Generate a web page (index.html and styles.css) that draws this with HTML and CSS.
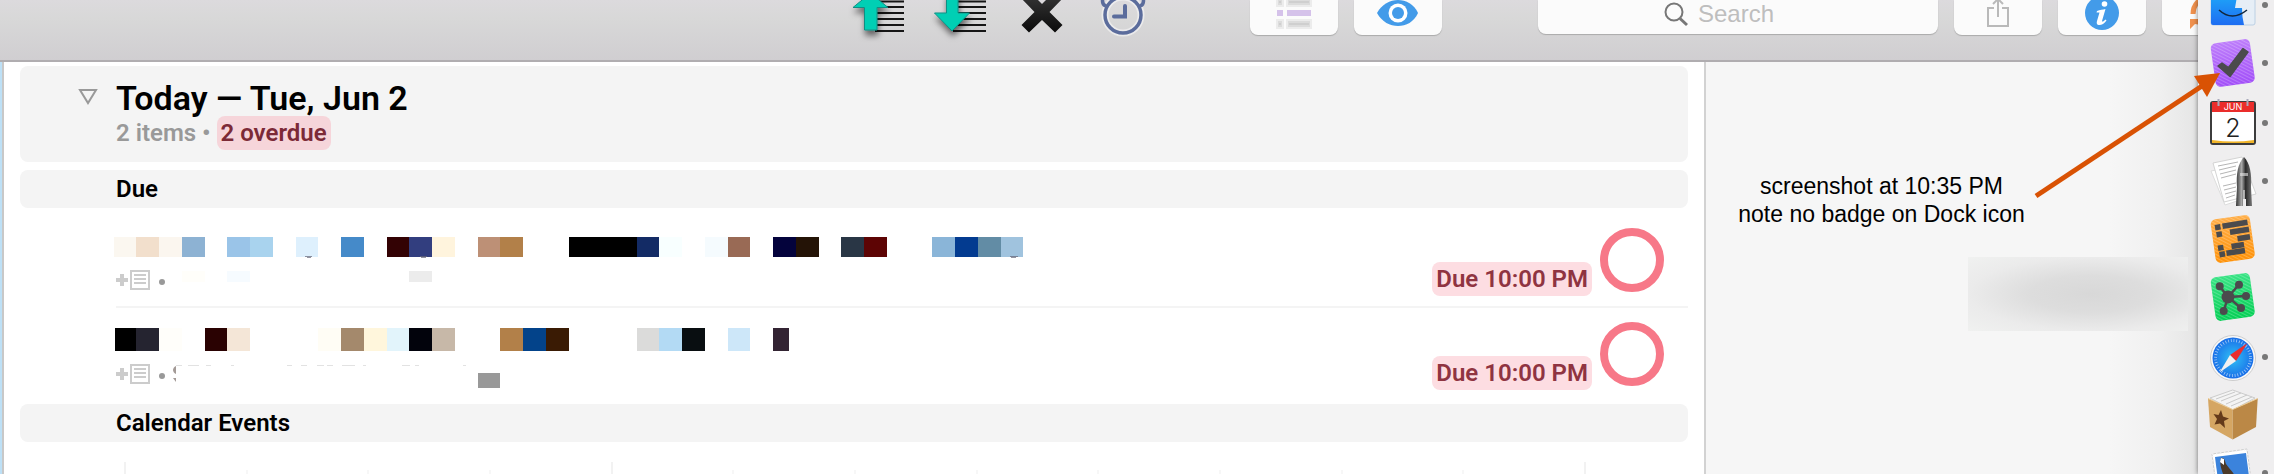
FILE: index.html
```
<!DOCTYPE html>
<html lang="en">
<head>
<meta charset="utf-8">
<title>Forecast</title>
<link rel="stylesheet" href="styles.css">
</head>
<body>
<svg class="defs" width="0" height="0" aria-hidden="true">
  <defs>
    <linearGradient id="purple" x1="0" y1="0" x2="0" y2="1"><stop offset="0" stop-color="#bd7dfb"/><stop offset="1" stop-color="#a24ff8"/></linearGradient>
    <linearGradient id="orange" x1="0" y1="0" x2="0" y2="1"><stop offset="0" stop-color="#ffae48"/><stop offset="1" stop-color="#ff9208"/></linearGradient>
    <linearGradient id="green" x1="0" y1="0" x2="0" y2="1"><stop offset="0" stop-color="#38e384"/><stop offset="1" stop-color="#05cf55"/></linearGradient>
    <linearGradient id="finder" x1="0" y1="0" x2="0" y2="1"><stop offset="0" stop-color="#1ec4fb"/><stop offset="1" stop-color="#1e6df2"/></linearGradient>
    <linearGradient id="ink" x1="0" y1="0" x2="0" y2="1"><stop offset="0" stop-color="#333"/><stop offset="1" stop-color="#0a0a0a"/></linearGradient>
    <linearGradient id="metal" x1="0" y1="0" x2="1" y2="0"><stop offset="0" stop-color="#333"/><stop offset=".35" stop-color="#aaa"/><stop offset=".6" stop-color="#2b2b2b"/><stop offset="1" stop-color="#777"/></linearGradient>
    <radialGradient id="safari"><stop offset="0" stop-color="#2fc0f5"/><stop offset="1" stop-color="#1a6fe8"/></radialGradient>
    <pattern id="stripes" width="3" height="3" patternUnits="userSpaceOnUse" patternTransform="rotate(35)"><path d="M0 0H3" stroke="#fff" stroke-opacity=".22" stroke-width="2"/></pattern>
    <filter id="soft" x="-50%" y="-50%" width="200%" height="200%"><feDropShadow dx="1" dy="5" stdDeviation="3" flood-opacity=".55"/></filter>
  </defs>
</svg>

<div class="screen">
  <div class="window">
    <header class="toolbar">
      <button class="tool" aria-label="Move up">
        <svg width="60" height="44" viewBox="0 0 60 44"><path d="M27 1.500H56M27 7H56M27 13H56M27 19H56M27 25H56M27 31H56" stroke="#161616" stroke-width="2"/><path filter="url(#soft)" d="M22.500-7 40 7.500H29V30H16.500V7.500H5Z" fill="#06cfb4" stroke="#0a8f84"/></svg>
      </button>
      <button class="tool" aria-label="Move down">
        <svg width="60" height="44" viewBox="0 0 60 44"><path d="M27 1.500H56M27 7H56M27 13H56M27 19H56M25 25H56M23 31H56" stroke="#161616" stroke-width="2"/><path filter="url(#soft)" d="M16.500-7H28V13H39.500L22 31 4.500 13H16.500Z" fill="#06cfb4" stroke="#0a8f84"/></svg>
      </button>
      <button class="tool" aria-label="Delete">
        <svg width="60" height="44" viewBox="0 0 60 44"><path d="M9.500 25 22.500 12 8-3H23L30 4 37-3H52L37.500 12 50.500 25 43 32.500 30 20 17 32.500Z" fill="url(#ink)"/></svg>
      </button>
      <button class="tool" aria-label="Snooze">
        <svg width="60" height="44" viewBox="0 0 60 44" fill="none" stroke="#fff" stroke-opacity=".5" stroke-width="7"><circle cx="29" cy="15" r="18"/><g stroke="#5b6c9c" stroke-opacity="1" stroke-width="3.500"><circle cx="29" cy="15" r="18"/><path d="M12 6C7 4 8-2 11-5M46 6C51 4 50-2 47-5"/><path d="M31 6V16.500H20" stroke-width="4" stroke-linecap="round"/></g></svg>
      </button>
      <div class="group group-view">
        <button class="button" aria-label="View">
          <svg width="40" height="32" viewBox="0 0 40 32"><g fill="#dcdcdc" stroke="#ececec" stroke-width="2"><path d="M3-3H9V6H3ZM13-3H37V6H13ZM3 20H9V28H3ZM13 20H37V28H13Z"/></g><path d="M7 2H5M35 2H15M7 24H5M35 24H15" stroke="#cfcfcf" stroke-width="2"/><path d="M3 10H9V16H3ZM13 10H37V16H13Z" fill="#d5c2ea"/></svg>
        </button>
        <button class="button" aria-label="Perspectives">
          <svg width="42" height="32" viewBox="0 0 42 32"><path d="M0 13C5 4 13 0 21 0S37 4 41 13C37 22 29 26 21 26S5 22 0 13Z" fill="#439be9"/><circle cx="21" cy="13" r="9.500" fill="#fff"/><circle cx="21" cy="13" r="6" fill="#439be9"/></svg>
        </button>
      </div>
      <div class="group">
        <label class="search">
          <svg width="26" height="28" viewBox="0 0 26 28" fill="none" stroke="#777"><circle cx="10" cy="12" r="8.500" stroke-width="2"/><path d="M16 18.500 23 25" stroke-width="3"/></svg>
          <input type="text" placeholder="Search" aria-label="Search">
        </label>
        <button class="button" aria-label="Share">
          <svg width="24" height="30" viewBox="0 0 24 30" fill="none" stroke="#b9b9b9" stroke-width="2"><path d="M8 8H2V26H22V8H16M12 17V-2M7 4 12-1 17 4"/></svg>
        </button>
        <button class="button" aria-label="Info">
          <svg width="34" height="32" viewBox="0 0 34 32"><circle cx="17" cy="13" r="17" fill="#439be9"/><circle cx="19.500" cy="4" r="2.800" fill="#fff"/><path d="M12 11C15 10 18 9.500 20.500 9L17 21C17 22.500 19 21 20.500 19.500L21.500 20.500C19 24 16 25.500 13.500 25 11.500 24.500 11.500 22.500 12 21L14.500 12.500H11.500Z" fill="#fff"/></svg>
        </button>
        <button class="button button-last" aria-label="Sync">
          <svg width="36" height="32" viewBox="0 0 36 32"><path d="M3 14C3 4 10-2 18-3" fill="none" stroke="#f0914e" stroke-width="5"/><path d="M0 19H14V28L10 25 5 24 0 29Z" fill="#f0914e"/></svg>
        </button>
      </div>
    </header>

    <div class="body">
      <main class="outline">
        <section class="card day">
          <button class="disclosure" aria-label="Collapse"><svg width="20" height="18" viewBox="0 0 20 18"><path d="M2 2H18L10 15Z" fill="none" stroke="#999" stroke-width="2"/></svg></button>
          <div>
            <h1 class="title">Today — Tue, Jun 2</h1>
            <p class="summary">2 items • <span class="badge badge-overdue">2 overdue</span></p>
          </div>
        </section>
        <h2 class="card section">Due</h2>
        <ul class="items">
          <li class="item">
            <div class="content">
              <svg class="redacted" width="910" height="25" viewBox="0 0 910 25" shape-rendering="crispEdges">
                <path d="M-2 3h22v20h-22z" fill="#fbf7f0"/><path d="M20 3h23v20h-23z" fill="#f2dfcc"/><path d="M43 3h23v20h-23z" fill="#fbf6ef"/><path d="M66 3h23v20h-23z" fill="#8db2d3"/><path d="M111 3h23v20h-23z" fill="#9ac4e8"/><path d="M134 3h23v20h-23z" fill="#a9d3ee"/><path d="M180 3h22v20h-22z" fill="#def0fd"/><path d="M225 3h23v20h-23z" fill="#458ac9"/><path d="M271 3h22v20h-22z" fill="#330204"/><path d="M293 3h23v20h-23z" fill="#323e7f"/><path d="M316 3h23v20h-23z" fill="#fff4dd"/><path d="M362 3h22v20h-22z" fill="#bd9076"/><path d="M384 3h23v20h-23z" fill="#b28049"/><path d="M453 3h68v20h-68z" fill="#000"/><path d="M521 3h22v20h-22z" fill="#132b65"/><path d="M543 3h23v20h-23z" fill="#f8ffff"/><path d="M589 3h23v20h-23z" fill="#f5fbfe"/><path d="M612 3h22v20h-22z" fill="#996a55"/><path d="M657 3h23v20h-23z" fill="#04033c"/><path d="M680 3h23v20h-23z" fill="#241306"/><path d="M725 3h23v20h-23z" fill="#293645"/><path d="M748 3h23v20h-23z" fill="#5d0404"/><path d="M816 3h23v20h-23z" fill="#8ab5d8"/><path d="M839 3h23v20h-23z" fill="#033b90"/><path d="M862 3h23v20h-23z" fill="#628ca5"/><path d="M885 3h22v20h-22z" fill="#a0c3de"/>
                <path d="M189 22h7v1h-7zM191 23h4v1h-4zM304 22h7v1h-7zM305 23h5v1h-5zM894 22h8v1h-8zM895 23h5v1h-5z" fill="#667" fill-opacity=".7"/>
              </svg>
              <svg class="meta" width="400" height="24" viewBox="0 0 400 24">
                <path d="M6 4V16M0 10H12" stroke="#ccc" stroke-width="4"/><path d="M15 1H33V19H15Z" fill="none" stroke="#ccc" stroke-width="2"/><path d="M18 5H30M18 9H30M18 13H30" stroke="#ccc" stroke-width="2"/><circle cx="46" cy="12" r="3" fill="#999"/><path d="M66 1h23v11h-23z" fill="#fffefa"/><path d="M111 1h23v11h-23z" fill="#f6fbff"/><path d="M293 1h23v11h-23z" fill="#ececec"/>
              </svg>
            </div>
            <span class="badge badge-due">Due 10:00 PM</span>
            <input class="status" type="checkbox" aria-label="Complete first item">
          </li>
          <li class="item">
            <div class="content">
              <svg class="redacted" width="910" height="25" viewBox="0 0 910 25" shape-rendering="crispEdges">
                <path d="M-1 0h21v23h-21z" fill="#000"/><path d="M20 0h23v23h-23z" fill="#252430"/><path d="M43 0h23v23h-23z" fill="#fffefa"/><path d="M89 0h22v23h-22z" fill="#2a0202"/><path d="M111 0h23v23h-23z" fill="#f4e6d7"/><path d="M202 0h23v23h-23z" fill="#fffdf5"/><path d="M225 0h23v23h-23z" fill="#a4896c"/><path d="M248 0h23v23h-23z" fill="#fff6dc"/><path d="M271 0h22v23h-22z" fill="#e2f4fb"/><path d="M293 0h23v23h-23z" fill="#02030c"/><path d="M316 0h23v23h-23z" fill="#c7b8a8"/><path d="M384 0h23v23h-23z" fill="#b28049"/><path d="M407 0h23v23h-23z" fill="#03438a"/><path d="M430 0h23v23h-23z" fill="#3a1b04"/><path d="M521 0h22v23h-22z" fill="#dbdbda"/><path d="M543 0h23v23h-23z" fill="#b3daf4"/><path d="M566 0h23v23h-23z" fill="#090e11"/><path d="M612 0h22v23h-22z" fill="#cde7f9"/><path d="M657 0h16v23h-16z" fill="#332433"/>
              </svg>
              <svg class="meta" width="400" height="24" viewBox="0 0 400 24">
                <path d="M6 4V16M0 10H12" stroke="#ccc" stroke-width="4"/><path d="M15 1H33V19H15Z" fill="none" stroke="#ccc" stroke-width="2"/><path d="M18 5H30M18 9H30M18 13H30" stroke="#ccc" stroke-width="2"/><circle cx="46" cy="12" r="3" fill="#999"/><path d="M60 2C56 4 56 8 60 10ZM57 14H60V18Z" fill="#a39a96"/><path d="M60 1.500h6M72 1.500h11M90 1.500h5M115 1.500h3M171 1.500h5M185 1.500h6M201 1.500h7M211 1.500h6M226 1.500h13M247 1.500h3M286 1.500h8M299 1.500h4M347 1.500h3" stroke="#e2e2e2"/><path d="M362 9h22v15h-22z" fill="#999"/>
              </svg>
            </div>
            <span class="badge badge-due">Due 10:00 PM</span>
            <input class="status" type="checkbox" aria-label="Complete second item">
          </li>
        </ul>
        <h2 class="card section section-events">Calendar Events</h2>
        <div class="ticks">
          <i class="tick major"></i><i class="tick"></i><i class="tick"></i><i class="tick"></i><i class="tick major"></i><i class="tick"></i><i class="tick"></i><i class="tick"></i><i class="tick"></i><i class="tick"></i><i class="tick"></i><i class="tick"></i><i class="tick major"></i>
        </div>
      </main>
      <aside class="inspector">
        <p class="note">screenshot at 10:35 PM<br>note no badge on Dock icon</p>
        <div class="smudge"></div>
      </aside>
    </div>
  </div>

  <nav class="dock" aria-label="Dock">
    <svg width="66" height="29" viewBox="0 21 66 29"><path d="M7 0H51V44Q51 46 49 46H9Q7 46 7 44Z" fill="#e6eef6" stroke="#bcd0e4"/><path d="M7 0H36L31 29H38Q38 38 40 46H9Q7 46 7 44Z" fill="url(#finder)"/><path d="M15 31Q28 43 43 31" fill="none" stroke="#12263c" stroke-width="1.500"/><circle class="running" cx="61" cy="26" r="3"/></svg>
    <svg width="66" height="50" viewBox="0 0 66 50"><g transform="rotate(-8 28.700 25)"><rect x="9" y="3" width="39.500" height="44" rx="5" fill="url(#purple)"/><rect x="9" y="3" width="39.500" height="44" rx="5" fill="url(#stripes)"/></g><path d="M14 28 18 25 24.500 29.500 39 10.500 44 14 26 38.500Z" fill="#4b4b4d" stroke="#4b4b4d" stroke-width="1.500" stroke-linejoin="round"/><circle class="running" cx="61" cy="25" r="3"/></svg>
    <svg width="66" height="50" viewBox="0 0 66 50"><rect x="7" y="5" width="44" height="42" rx="2" fill="#fff" stroke="#3c3c3c" stroke-width="2"/><path d="M8 5H50V15H8Z" fill="#ea2d2b"/><path d="M8 43Q30 46 50 43V46H8Z" fill="#f0b429"/><path d="M14.500 2V9M43.500 2V9" stroke="#aab" stroke-width="2"/><text class="month" x="29" y="13">JUN</text><text class="date" x="29" y="40">2</text><circle class="running" cx="61" cy="26" r="3"/></svg>
    <svg width="66" height="50" viewBox="0 0 66 50"><path d="M7 15 12 14 36 44 21 49Z" fill="#fff" stroke="#ddd"/><path d="M9 7 38 1 52 38 20 46Z" fill="#fff" stroke="#d4d4d4"/><path d="M14 10 34 6M15 14 32 10M16 18 32 14M17 22 32 18M19 30 32 27M20 34 32 31M21 38 32 35M22 42 31 39" stroke="#b5b5b5"/><path d="M40 1C46 7 48 18 47 31L48 50H42V43H39V50H32L33 31C32 18 34 7 40 1Z" fill="url(#metal)"/><path d="M36 17H44V20H36ZM39 34H41V50H39Z" fill="#e8e8e8" fill-opacity=".6"/><circle class="running" cx="61" cy="25" r="3"/></svg>
    <svg width="66" height="50" viewBox="0 0 66 50"><g transform="rotate(-8 28.700 24)"><rect x="9" y="2" width="39.500" height="44" rx="5" fill="url(#orange)"/><rect x="9" y="2" width="39.500" height="44" rx="5" fill="url(#stripes)"/></g><path d="M11 12.700 16.500 11.800M18.500 11.300 43.500 7.300M12.500 19.800 18 18.900M26 17.300 45 14.300M33.500 23.700 46 21.700M27.500 31.500 40 29.500M14 33.300 19.500 32.400M15.500 39.700 21 38.800M22.500 38.300 41 35.500" stroke="#4b4b4d" stroke-width="5.500"/></svg>
    <svg width="66" height="50" viewBox="0 0 66 50"><g transform="rotate(-8 28.700 23)"><rect x="9" y="1" width="39.500" height="44" rx="5" fill="url(#green)"/><rect x="9" y="1" width="39.500" height="44" rx="5" fill="url(#stripes)"/></g><path d="M24 23 15.700 12.300M24 23 35 10.700M24 23 42 22M24 23 37 34M24 23 19.700 37" stroke="#4b4b4d" stroke-width="2.500"/><g fill="#4b4b4d"><circle cx="24" cy="23" r="6.500"/><circle cx="15.700" cy="12.300" r="4"/><circle cx="35" cy="10.700" r="4"/><circle cx="42" cy="22" r="4"/><circle cx="37" cy="34" r="4"/><circle cx="19.700" cy="37" r="4"/></g></svg>
    <svg width="66" height="50" viewBox="0 0 66 50"><circle cx="29" cy="25" r="22.500" fill="#fafafa" stroke="#ccc"/><circle cx="29" cy="25" r="20.500" fill="url(#safari)"/><circle cx="29" cy="25" r="17.500" fill="none" stroke="#fff" stroke-opacity=".6" stroke-width="3" stroke-dasharray=".8 1.950"/><path d="M43.500 10 26 22 32 28Z" fill="#ea2e2e"/><path d="M15.500 39.500 26 22 32 28Z" fill="#f1f1f1"/><circle class="running" cx="61" cy="24" r="3"/></svg>
    <svg width="66" height="50" viewBox="0 0 66 50"><path d="M6 6 28.700-2 51 6 28.700 18Z" fill="#f4f4f4" stroke="#ccc"/><path d="M12 7 31 0M17 9 37 1M22 12 43 3M27 14 48 5" stroke="#c9c9c9"/><path d="M4 6.500 28.700 17.500V47.500L6 35Z" fill="#d5a663"/><path d="M53.700 6.500 28.700 17.500V47.500L52 35Z" fill="#bb8846"/><path d="M4 6.500 28.700 17.500 53.700 6.500" fill="none" stroke="#eccb93"/><path d="M17 18 19 24.500 25 26.500 20 29 21 36 16 31.500 10.500 32.500 13 27 9.500 22 14.500 23Z" fill="#643a1a"/></svg>
    <svg width="66" height="50" viewBox="0 0 66 50"><path d="M8 3 43-2 49 44 14 49Z" fill="#fff" stroke="#ccc"/><path d="M8 3 43-2 49 44 14 49Z" fill="none" stroke="#efeeef" stroke-width="2" stroke-dasharray="1.500 2.500"/><path d="M11 6 42 2 47 41 16 45Z" fill="#3b83dc"/><path d="M17 7C20 6 21 10 22 13 26 19 31 22 34 32H20C22 24 14 17 17 7Z" fill="#4b3a2a"/><path d="M17 7 20 8 20 14 16 11Z" fill="#fff"/><circle class="running" cx="61" cy="22" r="3"/></svg>
  </nav>

  <svg class="arrow" width="190" height="130" viewBox="0 0 190 130" aria-hidden="true"><path d="M3 126 172 14" stroke="#d95204" stroke-width="5"/><path d="M187 3 161 6 174 27Z" fill="#d95204"/></svg>
</div>
</body>
</html>
```
FILE: styles.css
```
* { box-sizing: border-box; }
body { margin: 0; font-family: Roboto, "Liberation Sans", sans-serif; }
svg { display: block; flex: none; }
button { border: 0; padding: 0; background: none; font: inherit; }
h1, h2, p, ul { margin: 0; padding: 0; }
.defs { position: absolute; }

.screen { position: relative; display: flex; height: 100vh; overflow: hidden; }
.window { flex: 1; min-width: 0; display: flex; flex-direction: column; }

.toolbar {
  display: flex; align-items: flex-start; justify-content: flex-end; gap: 22px;
  flex: none; height: 62px; overflow: hidden;
  border-bottom: 2px solid #b0adb0;
  background: linear-gradient(#dcdadd, #d8d8d8 30%, #d0ced1);
}
.tool { width: 60px; flex: none; }
.group { display: flex; gap: 16px; flex: none; margin-left: 74px; }
.button, .search {
  display: flex; justify-content: center; width: 88px; height: 35px;
  border-radius: 0 0 8px 8px; background: #fbfbfb; box-shadow: 0 1px 1px #aaa;
}
.search { justify-content: flex-start; width: 400px; height: 34px; gap: 8px; padding-left: 126px; }
.search input {
  flex: 1; min-width: 0; height: 28px; padding: 0; border: 0; outline: 0; background: none;
  font: 24px/28px "Liberation Sans", sans-serif;
}
.search input::placeholder { color: #bebebe; opacity: 1; }
.button-last { justify-content: flex-start; width: 36px; padding-left: 28px; border-radius: 0 0 0 8px; overflow: hidden; }

.body { flex: 1; display: flex; min-height: 0; }
.outline {
  flex: 1; min-width: 0; padding: 4px 16px 0; overflow: hidden;
  border-left: 2px solid #c8c8c8; box-shadow: -2px 0 #bde0f6;
  margin-left: 2px; background: #fff;
}
.card { border-radius: 8px; background: #f4f4f4; }
.day { display: flex; gap: 18px; padding: 14px 58px 12px; }
.disclosure { width: 20px; height: 18px; margin-top: 8px; }
.title { font-size: 34px; line-height: 36px; font-weight: 600; }
.summary { font-size: 24px; line-height: 34px; font-weight: 600; color: #999; }
.badge {
  display: inline-block; padding: 0 4px; border-radius: 8px;
  font-size: 24px; line-height: 34px; font-weight: 600; white-space: nowrap;
}
.badge-overdue { background: #f6d5da; color: #7c2a37; }
.badge-due { margin-top: 48px; background: #fddde2; color: #8f3441; }
.section { margin-top: 8px; padding-left: 96px; font-size: 24px; line-height: 38px; font-weight: 600; }
.section-events { margin-top: 2px; }

.items { list-style: none; margin: 6px 0 0 96px; }
.item { display: flex; align-items: flex-start; gap: 8px; height: 94px; padding-right: 24px; }
.item:first-child { border-bottom: 2px solid #f4f4f4; }
.content { flex: 1; min-width: 0; padding-top: 20px; }
.redacted { overflow: visible; margin-bottom: 11px; }
.status {
  appearance: none; flex: none; width: 64px; height: 64px; margin: 14px 0 0;
  border: 8px solid #f77888; border-radius: 50%; background: #fff;
}
.ticks { display: flex; justify-content: space-between; align-items: flex-start; margin: 20px 102px 0 104px; }
.tick { width: 2px; height: 4px; margin-top: 8px; background: #f7f7f7; }
.major { height: 12px; margin-top: 0; background: #f2f2f2; }

.inspector {
  width: 494px; padding-top: 110px;
  display: flex; flex-direction: column; align-items: flex-end;
  border-left: 2px solid #d2d2d2;
  background: linear-gradient(90deg, #f6f6f6 82%, #f0f0f0 92%, #e5e5e5);
}
.note { align-self: stretch; padding-right: 141px; text-align: center; font: 23px/28px "Liberation Sans", sans-serif; }
.smudge {
  width: 220px; height: 74px; margin: 29px 10px 0 0;
  background: radial-gradient(ellipse at 56% 50%, #d8d8d8, #dddddd 35%, #ebebeb 70%, #f0f1f0);
}

.dock {
  position: relative; flex: none; width: 76px; padding-left: 6px;
  display: flex; flex-direction: column; gap: 9px;
  background: #efeeef; box-shadow: 0 0 5px rgba(0, 0, 0, .5);
}
.dock svg { overflow: visible; }
.dock svg:first-child { overflow: hidden; }
.running { fill: #777; }
.month, .date { text-anchor: middle; font-family: Inter, sans-serif; }
.month { font-size: 9px; fill: #fff; }
.date { font-size: 25px; font-weight: 300; fill: #222; }

.arrow { position: absolute; top: 70px; right: 51px; }
```
